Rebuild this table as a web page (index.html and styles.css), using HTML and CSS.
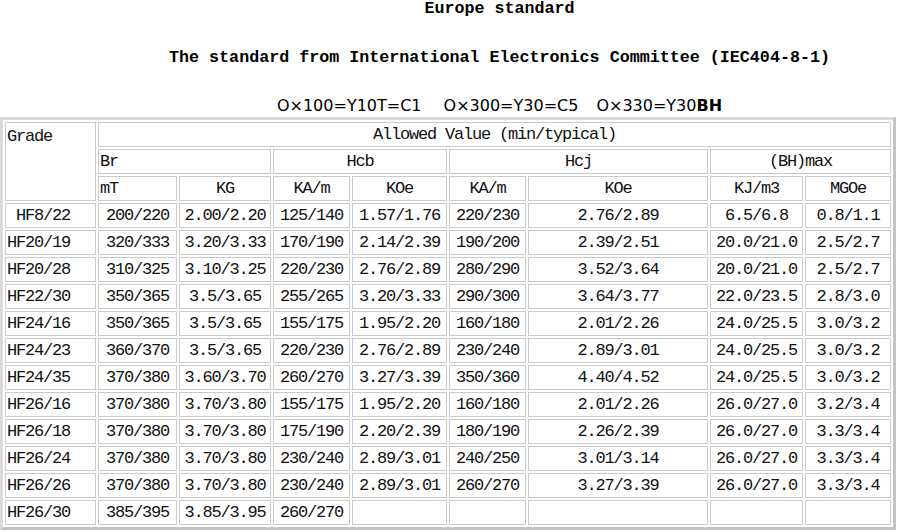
FILE: index.html
```html
<!DOCTYPE html>
<html>
<head>
<meta charset="utf-8">
<title>Europe standard</title>
<link rel="stylesheet" href="styles.css">
</head>
<body>
<div class="heading">
  <div class="title-main">Europe standard</div>
  <div class="title-sub">The standard from International Electronics Committee (IEC404-8-1)</div>
  <div class="formula"><span class="grp">O×100=Y10T=C1</span><span class="grp gap1">O×300=Y30=C5</span><span class="grp gap2">O×330=Y30<b>BH</b></span></div>
</div>
<table class="grid">
  <colgroup>
    <col class="c-grade"><col class="c-mt"><col class="c-kg"><col class="c-hcb-ka"><col class="c-hcb-koe"><col class="c-hcj-ka"><col class="c-hcj-koe"><col class="c-kj"><col class="c-mgoe">
  </colgroup>
  <tr><td class="grade-head" rowspan="3">Grade</td><td colspan="8">Allowed Value (min/typical)</td></tr>
  <tr><td class="left" colspan="2">Br</td><td colspan="2">Hcb</td><td colspan="2">Hcj</td><td colspan="2">(BH)max</td></tr>
  <tr><td class="left">mT</td><td>KG</td><td>KA/m</td><td>KOe</td><td>KA/m</td><td>KOe</td><td>KJ/m3</td><td>MGOe</td></tr>
  <tr><td class="left first-grade">HF8/22</td><td>200/220</td><td>2.00/2.20</td><td>125/140</td><td>1.57/1.76</td><td>220/230</td><td>2.76/2.89</td><td>6.5/6.8</td><td>0.8/1.1</td></tr>
  <tr><td class="left">HF20/19</td><td>320/333</td><td>3.20/3.33</td><td>170/190</td><td>2.14/2.39</td><td>190/200</td><td>2.39/2.51</td><td>20.0/21.0</td><td>2.5/2.7</td></tr>
  <tr><td class="left">HF20/28</td><td>310/325</td><td>3.10/3.25</td><td>220/230</td><td>2.76/2.89</td><td>280/290</td><td>3.52/3.64</td><td>20.0/21.0</td><td>2.5/2.7</td></tr>
  <tr><td class="left">HF22/30</td><td>350/365</td><td>3.5/3.65</td><td>255/265</td><td>3.20/3.33</td><td>290/300</td><td>3.64/3.77</td><td>22.0/23.5</td><td>2.8/3.0</td></tr>
  <tr><td class="left">HF24/16</td><td>350/365</td><td>3.5/3.65</td><td>155/175</td><td>1.95/2.20</td><td>160/180</td><td>2.01/2.26</td><td>24.0/25.5</td><td>3.0/3.2</td></tr>
  <tr><td class="left">HF24/23</td><td>360/370</td><td>3.5/3.65</td><td>220/230</td><td>2.76/2.89</td><td>230/240</td><td>2.89/3.01</td><td>24.0/25.5</td><td>3.0/3.2</td></tr>
  <tr><td class="left">HF24/35</td><td>370/380</td><td>3.60/3.70</td><td>260/270</td><td>3.27/3.39</td><td>350/360</td><td>4.40/4.52</td><td>24.0/25.5</td><td>3.0/3.2</td></tr>
  <tr><td class="left">HF26/16</td><td>370/380</td><td>3.70/3.80</td><td>155/175</td><td>1.95/2.20</td><td>160/180</td><td>2.01/2.26</td><td>26.0/27.0</td><td>3.2/3.4</td></tr>
  <tr><td class="left">HF26/18</td><td>370/380</td><td>3.70/3.80</td><td>175/190</td><td>2.20/2.39</td><td>180/190</td><td>2.26/2.39</td><td>26.0/27.0</td><td>3.3/3.4</td></tr>
  <tr><td class="left">HF26/24</td><td>370/380</td><td>3.70/3.80</td><td>230/240</td><td>2.89/3.01</td><td>240/250</td><td>3.01/3.14</td><td>26.0/27.0</td><td>3.3/3.4</td></tr>
  <tr><td class="left">HF26/26</td><td>370/380</td><td>3.70/3.80</td><td>230/240</td><td>2.89/3.01</td><td>260/270</td><td>3.27/3.39</td><td>26.0/27.0</td><td>3.3/3.4</td></tr>
  <tr><td class="left">HF26/30</td><td>385/395</td><td>3.85/3.95</td><td>260/270</td><td></td><td></td><td></td><td></td><td></td></tr>
</table>
</body>
</html>
```
FILE: styles.css
```css
html, body {
  margin: 0;
  padding: 0;
  background: #ffffff;
  color: #000000;
}

.heading {
  padding-left: 98px;
  text-align: center;
}

.title-main,
.title-sub {
  font-family: "Liberation Mono", "DejaVu Sans Mono", monospace;
  font-weight: bold;
  font-size: 16.7px;
  line-height: 18px;
  height: 18px;
  white-space: nowrap;
}

.title-sub {
  margin-top: 31px;
}

.formula {
  margin-top: 29px;
  height: 21px;
  font-family: "DejaVu Sans", "Noto Sans CJK SC", sans-serif;
  font-size: 16px;
  line-height: 20px;
  white-space: nowrap;
}

.formula b {
  font-weight: bold;
}

.gap1 {
  margin-left: 22px;
}

.gap2 {
  margin-left: 18px;
}

.grid {
  table-layout: fixed;
  width: 896px;
  border-collapse: separate;
  border-spacing: 2px;
  border-style: solid;
  border-width: 3px;
  border-color: #dadada #c4c4c4 #c4c4c4 #dadada;
  font-family: "Liberation Mono", "DejaVu Sans Mono", monospace;
  font-size: 17px;
  letter-spacing: -1.2px;
  color: #111111;
}

.c-grade { width: 91px; }
.c-mt { width: 79px; }
.c-kg { width: 92px; }
.c-hcb-ka { width: 77px; }
.c-hcb-koe { width: 95px; }
.c-hcj-ka { width: 77px; }
.c-hcj-koe { width: 180px; }
.c-kj { width: 93px; }
.c-mgoe { width: 86px; }

.grid td {
  border: 1px solid #cacaca;
  padding: 0 1px;
  line-height: 23px;
  height: 23px;
  text-align: center;
  vertical-align: middle;
  white-space: nowrap;
  overflow: hidden;
}

.grid td.left {
  text-align: left;
}

.grid td.grade-head {
  text-align: left;
  vertical-align: top;
  padding-top: 2px;
}

.grid td.first-grade {
  padding-left: 10px;
}
```
